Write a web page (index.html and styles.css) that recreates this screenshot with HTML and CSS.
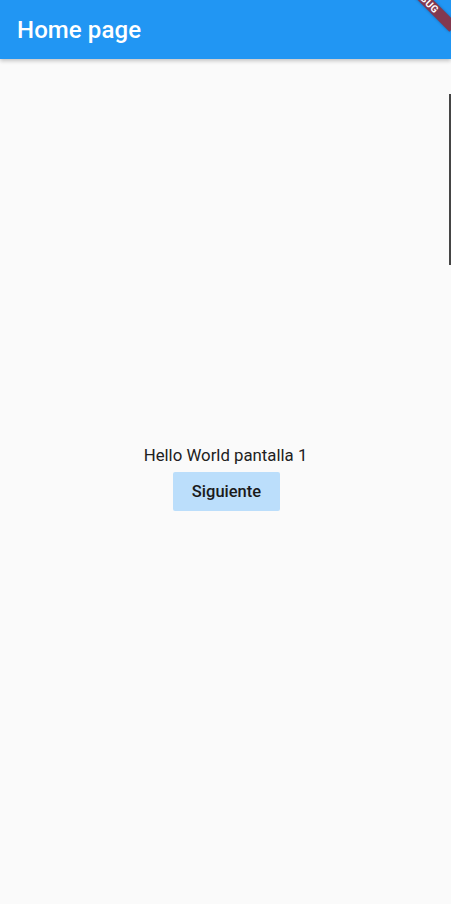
FILE: index.html
```html
<!DOCTYPE html>
<html>
<head>
<meta charset="utf-8">
<link rel="stylesheet" href="styles.css">
</head>
<body>
<div class="app">
  <header class="appbar">
    <h1 class="title">Home page</h1>
  </header>
  <main class="content">
    <p class="hello">Hello World pantalla 1</p>
    <button class="btn">Siguiente</button>
  </main>
  <div class="scrollbar"></div>
  <div class="banner"><span>DEBUG</span></div>
</div>
</body>
</html>
```

FILE: styles.css
```css
html, body {
  margin: 0;
  padding: 0;
  width: 451px;
  height: 904px;
  overflow: hidden;
  background: #fafafa;
  font-family: Roboto, "Noto Sans", sans-serif;
}
.app {
  position: relative;
  width: 451px;
  height: 904px;
  display: flex;
  flex-direction: column;
  overflow: hidden;
}
.appbar {
  height: 59px;
  flex: 0 0 59px;
  background: #2196f3;
  display: flex;
  align-items: center;
  padding-left: 17px;
  box-shadow: 0 2px 4px rgba(0,0,0,0.22);
  position: relative;
  z-index: 1;
}
.title {
  margin: 0;
  color: #fff;
  font-size: 24px;
  font-weight: 500;
  letter-spacing: 0.1px;
}
.content {
  flex: 1;
  display: flex;
  flex-direction: column;
  align-items: center;
  justify-content: center;
  padding-bottom: 8px;
}
.hello {
  margin: 0 0 6px 0;
  font-size: 16.8px;
  line-height: 21px;
  color: #212121;
}
.btn {
  width: 107px;
  height: 39px;
  margin-left: 2px;
  border: none;
  border-radius: 2px;
  background: #bbdefb;
  color: #1a1a1a;
  font-family: Roboto, sans-serif;
  font-size: 16.5px;
  font-weight: 500;
  padding: 0;
}
.scrollbar {
  position: absolute;
  right: 0;
  top: 94px;
  width: 2px;
  height: 171px;
  background: #454545;
}
.banner {
  position: absolute;
  left: 385px;
  top: -6px;
  width: 80px;
  height: 11px;
  background: #82384f;
  transform: rotate(45deg);
  display: flex;
  align-items: center;
  justify-content: center;
  z-index: 2;
  box-shadow: 0 0 3px rgba(0,0,0,0.3);
}
.banner span {
  color: #fff;
  font-size: 10px;
  font-weight: 700;
  line-height: 11px;
  letter-spacing: 0.4px;
}
```
